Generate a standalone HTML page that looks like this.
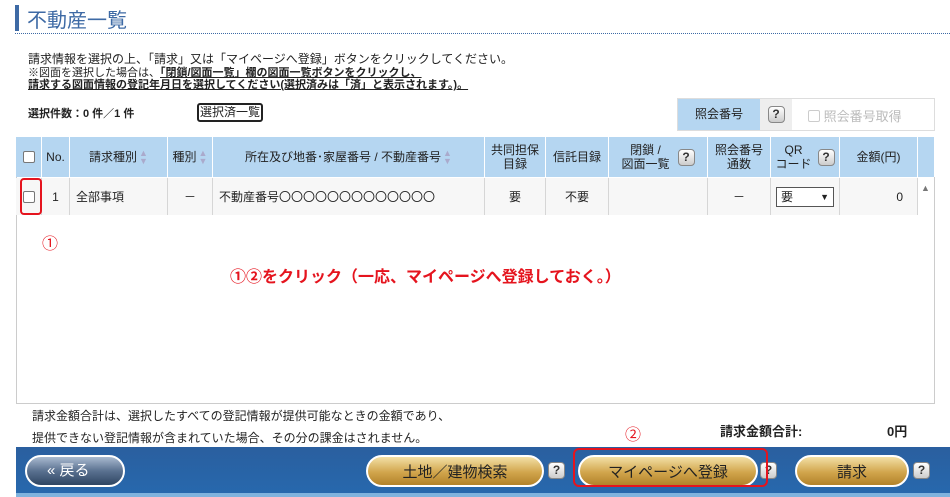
<!DOCTYPE html>
<html><head><meta charset="utf-8"><style>
*{margin:0;padding:0;box-sizing:border-box}
body{width:950px;height:497px;background:#fff;font-family:"Liberation Sans","Noto Sans CJK JP",sans-serif;font-size:12px;color:#222;position:relative;overflow:hidden}
.a{position:absolute;white-space:nowrap}
.th{position:absolute;top:137px;height:40px;background:#b5d6f1;border-right:1px solid #fff;display:flex;align-items:center;justify-content:center;text-align:center;font-size:12px;line-height:14px}
.td{position:absolute;top:178px;height:37px;background:#f7f7f7;border-right:1px solid #d6d6d6;display:flex;align-items:center;justify-content:center;font-size:12px}
.q{display:inline-block;width:17px;height:17px;border:1px solid #888;border-radius:4px;background:linear-gradient(#fff,#ccc);font-size:12px;line-height:15px;text-align:center;font-weight:bold;color:#333}
.gold{position:absolute;top:455px;height:32px;border:2px solid #fff;border-radius:16px;background:linear-gradient(#f3e0a6,#d1a54c 55%,#b2822a);font-size:15px;color:#222;display:flex;align-items:center;justify-content:center}
.cb{display:inline-block;width:12px;height:12px;border:1px solid #777;border-radius:2px;background:#fff}
.sort{font-size:9px;color:#aac;line-height:8px;display:inline-block;margin-left:2px}
</style></head><body>
<div class="a" style="left:15px;top:5px;width:4px;height:26px;background:#3e6aa5"></div>
<div class="a" style="left:27px;top:4px;font-size:20px;color:#3e6aa5">不動産一覧</div>
<div class="a" style="left:15px;top:33px;width:935px;border-top:1px dotted #3e6aa5"></div>
<div class="a" style="left:28px;top:50px">請求情報を選択の上、「請求」又は「マイページへ登録」ボタンをクリックしてください。</div>
<div class="a" style="left:28px;top:67px;font-size:11px;line-height:12px">※図面を選択した場合は、<b><u>「閉鎖/図面一覧」欄の図面一覧ボタンをクリックし、</u></b><br><b><u>請求する図面情報の登記年月日を選択してください(選択済みは「済」と表示されます。)。</u></b></div>
<div class="a" style="left:28px;top:105px;font-size:11px;font-weight:bold">選択件数：0 件／1 件</div>
<div class="a" style="left:197px;top:103px;width:66px;height:19px;border:2px solid #222;border-radius:3px;font-size:12px;text-align:center;line-height:15px">選択済一覧</div>
<div class="a" style="left:677px;top:98px;width:258px;height:33px;border:1px solid #ddd"></div>
<div class="a" style="left:678px;top:99px;width:82px;height:31px;background:#b5d6f1;text-align:center;line-height:31px">照会番号</div>
<div class="a" style="left:760px;top:99px;width:32px;height:31px;background:#eee;text-align:center;padding-top:7px"><span class="q">?</span></div>
<div class="a" style="left:808px;top:106px;color:#bbb;font-size:13px"><span class="cb" style="border-color:#ccc;vertical-align:-1px"></span> 照会番号取得</div>
<div class="a" style="left:16px;top:137px;width:919px;height:267px;border:1px solid #ccc"></div>
<div class="th" style="left:16px;width:26px"><span class="cb"></span></div>
<div class="th" style="left:42px;width:28px">No.</div>
<div class="th" style="left:70px;width:98px">請求種別<span class="sort">▲<br>▼</span></div>
<div class="th" style="left:168px;width:45px">種別<span class="sort">▲<br>▼</span></div>
<div class="th" style="left:213px;width:272px">所在及び地番･家屋番号 / 不動産番号<span class="sort">▲<br>▼</span></div>
<div class="th" style="left:485px;width:61px">共同担保<br>目録</div>
<div class="th" style="left:546px;width:63px">信託目録</div>
<div class="th" style="left:609px;width:99px"><span style="margin-right:8px">閉鎖 /<br>図面一覧</span><span class="q">?</span></div>
<div class="th" style="left:708px;width:63px">照会番号<br>通数</div>
<div class="th" style="left:771px;width:69px"><span style="margin-right:6px">QR<br>コード</span><span class="q">?</span></div>
<div class="th" style="left:840px;width:78px">金額(円)</div>
<div class="th" style="left:918px;width:17px;background:#b5d6f1"></div>
<div class="td" style="left:16px;width:26px"><span class="cb"></span></div>
<div class="td" style="left:42px;width:28px">1</div>
<div class="td" style="left:70px;width:98px;justify-content:flex-start;padding-left:6px">全部事項</div>
<div class="td" style="left:168px;width:45px">－</div>
<div class="td" style="left:213px;width:272px;justify-content:flex-start;padding-left:6px">不動産番号〇〇〇〇〇〇〇〇〇〇〇〇〇</div>
<div class="td" style="left:485px;width:61px">要</div>
<div class="td" style="left:546px;width:63px">不要</div>
<div class="td" style="left:609px;width:99px"></div>
<div class="td" style="left:708px;width:63px">－</div>
<div class="td" style="left:771px;width:69px"><span style="display:inline-block;width:58px;height:20px;border:1px solid #555;background:#fff;text-align:left;padding-left:4px;line-height:18px">要<span style="float:right;margin-right:4px;font-size:9px">▼</span></span></div>
<div class="td" style="left:840px;width:78px;justify-content:flex-end;padding-right:14px">0</div>
<div class="a" style="left:921px;top:183px;font-size:9px;color:#777">▲</div>
<div class="a" style="left:20px;top:178px;width:22px;height:37px;border:2px solid #e5141e;border-radius:4px"></div>
<div class="a" style="left:42px;top:230px;color:#e5141e;font-size:16px">①</div>
<div class="a" style="left:230px;top:263px;color:#e5141e;font-size:16px;font-weight:bold">①②をクリック（一応、マイページへ登録しておく。）</div>
<div class="a" style="left:32px;top:407px">請求金額合計は、選択したすべての登記情報が提供可能なときの金額であり、</div>
<div class="a" style="left:32px;top:429px">提供できない登記情報が含まれていた場合、その分の課金はされません。</div>
<div class="a" style="left:625px;top:421px;color:#e5141e;font-size:16px">②</div>
<div class="a" style="left:720px;top:421px;font-weight:bold;font-size:13px">請求金額合計:</div>
<div class="a" style="left:887px;top:421px;font-weight:bold;font-size:13px">0円</div>
<div class="a" style="left:16px;top:447px;width:934px;height:46px;background:linear-gradient(#2a5f9f,#2768ad)"></div>
<div class="a" style="left:16px;top:493px;width:934px;height:4px;background:#7fb3de"></div>
<div class="a" style="left:25px;top:455px;width:100px;height:32px;border:2px solid #fff;border-radius:16px;background:linear-gradient(#a9bad0,#5a7190 50%,#2e4562);color:#fff;font-size:15px;line-height:28px;padding-left:20px">« 戻る</div>
<div class="gold" style="left:366px;width:178px">土地／建物検索</div>
<div class="a" style="left:548px;top:462px"><span class="q">?</span></div>
<div class="gold" style="left:578px;width:180px">マイページへ登録</div>
<div class="a" style="left:760px;top:462px"><span class="q">?</span></div>
<div class="gold" style="left:795px;width:114px">請求</div>
<div class="a" style="left:913px;top:462px"><span class="q">?</span></div>
<div class="a" style="left:573px;top:448px;width:195px;height:39px;border:2px solid #e5141e;border-radius:6px"></div>
</body></html>
